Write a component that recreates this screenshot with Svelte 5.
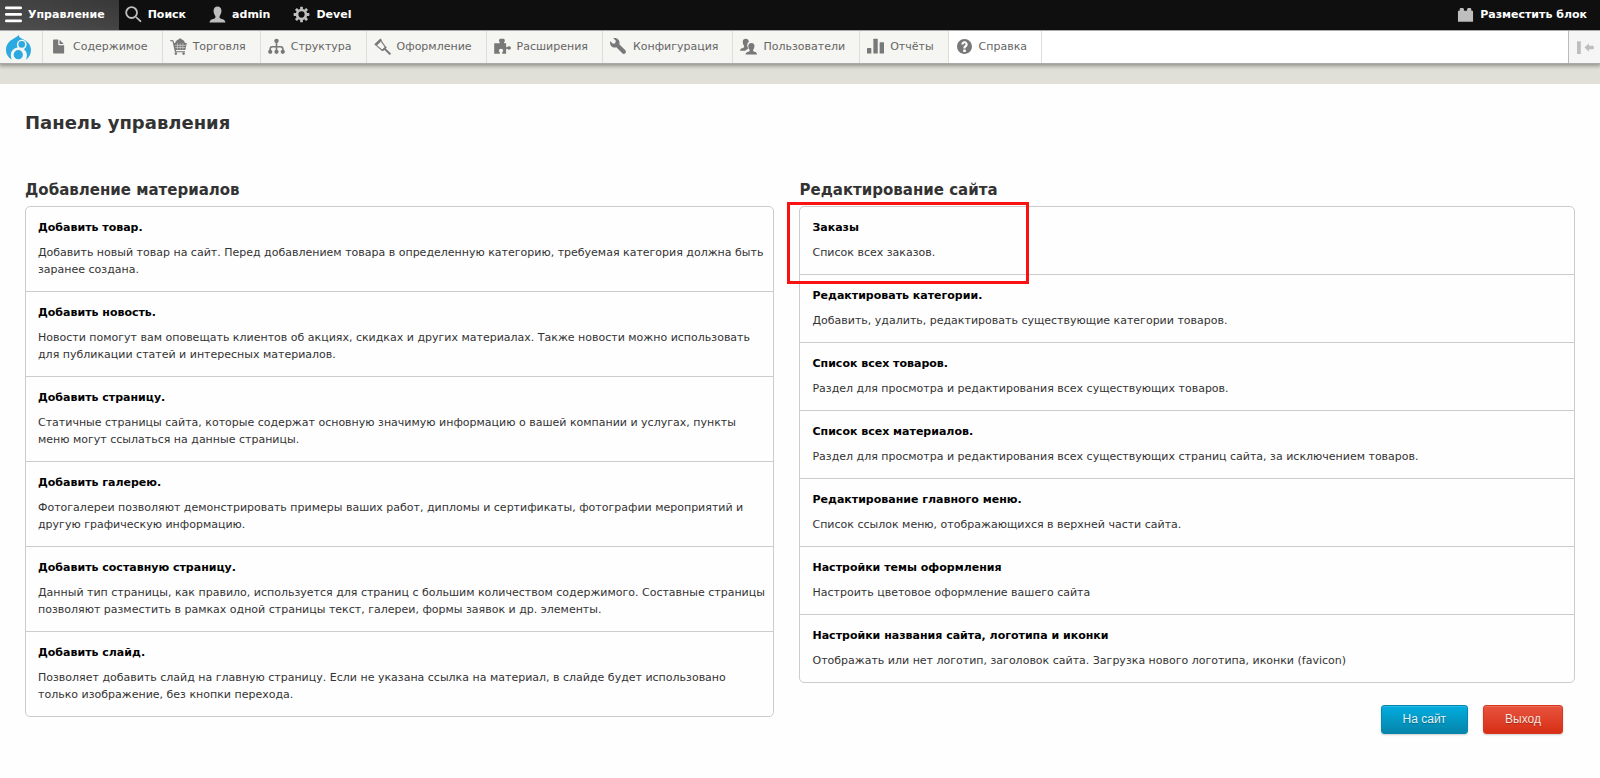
<script>
  const bar = [
    { icon: 'menu', label: 'Управление', active: true },
    { icon: 'search', label: 'Поиск' },
    { icon: 'user', label: 'admin' },
    { icon: 'gear', label: 'Devel' }
  ];

  const menu = [
    { icon: 'file', label: 'Содержимое' },
    { icon: 'cart', label: 'Торговля' },
    { icon: 'tree', label: 'Структура' },
    { icon: 'brush', label: 'Оформление' },
    { icon: 'puzzle', label: 'Расширения' },
    { icon: 'wrench', label: 'Конфигурация' },
    { icon: 'people', label: 'Пользователи' },
    { icon: 'chart', label: 'Отчёты' },
    { icon: 'help', label: 'Справка', plain: true }
  ];

  const adding = [
    ['Добавить товар.', 'Добавить новый товар на сайт. Перед добавлением товара в определенную категорию, требуемая категория должна быть заранее создана.'],
    ['Добавить новость.', 'Новости помогут вам оповещать клиентов об акциях, скидках и других материалах. Также новости можно использовать для публикации статей и интересных материалов.'],
    ['Добавить страницу.', 'Статичные страницы сайта, которые содержат основную значимую информацию о вашей компании и услугах, пункты меню могут ссылаться на данные страницы.'],
    ['Добавить галерею.', 'Фотогалереи позволяют демонстрировать примеры ваших работ, дипломы и сертификаты, фотографии мероприятий и другую графическую информацию.'],
    ['Добавить составную страницу.', 'Данный тип страницы, как правило, используется для страниц с большим количеством содержимого. Составные страницы позволяют разместить в рамках одной страницы текст, галереи, формы заявок и др. элементы.'],
    ['Добавить слайд.', 'Позволяет добавить слайд на главную страницу. Если не указана ссылка на материал, в слайде будет использовано только изображение, без кнопки перехода.']
  ];

  const editing = [
    ['Заказы', 'Список всех заказов.'],
    ['Редактировать категории.', 'Добавить, удалить, редактировать существующие категории товаров.'],
    ['Список всех товаров.', 'Раздел для просмотра и редактирования всех существующих товаров.'],
    ['Список всех материалов.', 'Раздел для просмотра и редактирования всех существующих страниц сайта, за исключением товаров.'],
    ['Редактирование главного меню.', 'Список ссылок меню, отображающихся в верхней части сайта.'],
    ['Настройки темы оформления', 'Настроить цветовое оформление вашего сайта'],
    ['Настройки названия сайта, логотипа и иконки', 'Отображать или нет логотип, заголовок сайта. Загрузка нового логотипа, иконки (favicon)']
  ];
</script>

{#snippet icon(name)}
  <svg class="icon" viewBox="0 0 16 16" aria-hidden="true" fill="currentColor">
    {#if name === 'menu'}
      <rect x="0" y="0.5" width="16" height="2.6" rx="1.2" />
      <rect x="0" y="6.6" width="16" height="2.6" rx="1.2" />
      <rect x="0" y="12.8" width="16" height="2.6" rx="1.2" />
    {:else if name === 'search'}
      <circle cx="6.2" cy="6.2" r="5.1" fill="none" stroke="currentColor" stroke-width="1.7" />
      <path d="M9.8 10.9l1.1-1.1 4.2 3.8c.6.6.2 1.6-.5 1.6-.3 0-.5-.1-.7-.3z" />
    {:else if name === 'user'}
      <path d="M8 .5c2.4 0 3.7 1.7 3.7 4 0 1.8-.7 3.600-1.500 4.700-.5.800-.4 2 .5 2.500 1.500.7 4.600.8 4.800 3.800H.5c.2-3 3.300-3.100 4.800-3.800.9-.5 1-1.700.5-2.500C5 8.100 4.300 6.300 4.300 4.500 4.300 2.200 5.600.5 8 .5z" />
    {:else if name === 'gear'}
      <circle cx="8" cy="8" r="4.2" fill="none" stroke="currentColor" stroke-width="2.5" />
      {#each [0, 45, 90, 135, 180, 225, 270, 315] as angle}
        <rect x="6.700" y="0.600" width="2.600" height="3" rx=".4" transform="rotate({angle} 8 8)" />
      {/each}
    {:else if name === 'brick'}
      <path d="M1.500 4.500h1V3C2.500 2.200 3.200 1.900 4.500 1.900s2 .3 2 1.100v1.500h3V3c0-.8.800-1.100 2-1.100s2 .3 2 1.100v1.500h1c.4 0 .6.200.6.600v9.300c0 .3-.2.500-.5.500H1.400c-.3 0-.5-.2-.5-.5V5.100c0-.4.200-.6.600-.6z" />
    {:else if name === 'file'}
      <path d="M3.500 1.500h4.300v4.700c0 .4.300.7.700.7h4.800v7c0 .3-.3.600-.6.600H3.500c-.3 0-.6-.3-.6-.6V2.100c0-.3.300-.6.600-.6zM9 1.700l4 4H9z" />
    {:else if name === 'cart'}
      <path d="M.1 2.300c0-.4.300-.6.700-.5l1.900.4c.4.100.6.300.7.700l.4 1.800h1C5.500 2.800 6.800 1.600 8.300 1.200L9.500 0l1.200 1.200c1.600.4 2.900 1.700 3.500 3.500h1.600l-1.200 5.900c-.1.400-.3.600-.7.600H5.500l.3 1.200h8.300v1H5.200c-.4 0-.6-.2-.7-.6L2.400 3.300.9 3C.4 2.900.1 2.700.1 2.300z" />
      <circle cx="5.500" cy="14.700" r="1.200" /><circle cx="12.800" cy="14.700" r="1.200" />
      <path d="M4.500 6.900h10.500M5 9h9.600M7.100 5v6M9.600 5v6M12.100 5v6" fill="none" stroke="#f5f5f2" stroke-width=".45" />
    {:else if name === 'tree'}
      <path d="M8 3v10M2 13v-2.300Q2 8.300 4 8.300h8q2 0 2 2.400V13" fill="none" stroke="currentColor" stroke-width="1.500" />
      <circle cx="8" cy="2.700" r="2.100" /><circle cx="2.100" cy="13" r="2" /><circle cx="8" cy="13" r="2" /><circle cx="13.900" cy="13" r="2" />
    {:else if name === 'brush'}
      <path d="M.3 5.900L6 .4l1.700 1.700-5.600 5.600z" />
      <path d="M2.700 7.400l5.200 4.300 3-3-4-5.600" fill="none" stroke="currentColor" stroke-width="1.100" stroke-linejoin="round" />
      <path d="M7.100 11.800l3.900-4 .9.900-.7 1.500 4.300 4c.9.900-.4 2.200-1.300 1.400l-4.300-4.200-1.700.8z" />
    {:else if name === 'puzzle'}
      <path d="M.2 4.900h4.900c.4 0 .5-.4.200-.8-.8-1-.8-2.900.4-3.500h3.600c1.100.7 1.100 2.500.3 3.500-.3.400-.1.800.3.800h1.500v3.200c0 .6.500.8 1 .4 1.400-1.100 3.500-.8 3.500.9s-2 2-3.400 1c-.6-.4-1.100-.2-1.100.400v4.100H7.700v-1.300c0-.4.900-.8.900-1.700 0-1-.9-1.700-2-1.700s-2 .7-2 1.700c0 .9.900 1.300.9 1.700v1.300H.2z" />
    {:else if name === 'wrench'}
      <path d="M14.416 11.586L8.750 5.921c.15-.449.252-.921.252-1.421 0-2.485-2.016-4.500-4.502-4.500-.505 0-.981.102-1.434.255l2.431 2.431-.588 2.196-2.196.588L.268 3.025C.106 3.489 0 3.981 0 4.500 0 6.986 2.014 9 4.500 9c.5 0 .972-.102 1.421-.251l5.667 5.665c.781.781 2.047.781 2.828 0s.781-2.047 0-2.828z" />
    {:else if name === 'people'}
      <path d="M5.500.8c1.900 0 2.900 1.200 2.800 3-1.500.7-1.700 2.300-1.400 4 .2.900.6 1.500 1 2.100-.9.800-2.300.8-2.900 2H.1c0-2.200 2-2.200 3.100-2.800.9-.5.9-1.200.4-2C3 6.100 2.600 5 2.600 3.700 2.600 2 3.700.8 5.500.8z" />
      <path d="M10.700 4.600c1.900 0 2.900 1.200 2.900 2.900 0 1.300-.4 2.400-1 3.300-.5.800-.5 1.400.4 1.800 1.200.6 3 .6 3 2.900H5.300c0-2.300 2-2.300 3.200-2.900.8-.4.8-1 .3-1.800-.6-.9-1-2-1-3.300 0-1.700 1-2.900 2.900-2.900z" />
    {:else if name === 'chart'}
      <rect x="0" y="9.500" width="4.100" height="5" rx=".5" />
      <rect x="6" y="0.700" width="4.100" height="13.800" rx=".5" />
      <rect x="11.900" y="4" width="4.100" height="10.500" rx=".5" />
    {:else if name === 'help'}
      <path d="M8.002 1c-3.868 0-7.002 3.134-7.002 7s3.134 7 7.002 7c3.865 0 7-3.134 7-7s-3.135-7-7-7zm3 5c0 .551-.16 1.085-.477 1.586l-.158.22c-.07.093-.189.241-.361.393-.168.148-.35.299-.545.447l-.203.189-.141.129-.096.17-.021.235v.63h-2.001v-.704c.026-.396.078-.73.204-.999.125-.269.271-.498.439-.688l.225-.21-.01-.015.176-.14.137-.128c.186-.139.357-.277.516-.417l.148-.18c.098-.152.168-.323.168-.518 0-.552-.447-1-1.002-1-.552 0-.999.448-.999 1h-2.002c0-1.657 1.343-3 3.002-3 1.656 0 3 1.343 3 3zm-1.750 6.619c0 .344-.281.625-.625.625h-1.250c-.345 0-.626-.281-.626-.625v-1.238c0-.344.281-.625.626-.625h1.250c.344 0 .625.281.625.625v1.238z" />
    {:else if name === 'collapse'}
      <path d="M0 2h3.600v12H0zM7 8l4.300-4v2.300H15c.5 0 .8.300.8.800v1.800c0 .5-.3.800-.8.800h-3.700V12z" />
    {/if}
  </svg>
{/snippet}

{#snippet list(items, marked)}
  <ul class="list">
    {#each items as [title, text], i}
      <li class:marked={marked && i === 0}>
        <a href="#top">{title}</a>
        <p>{text}</p>
      </li>
    {/each}
  </ul>
{/snippet}

<header>
  <nav class="bar" aria-label="Панель инструментов">
    {#each bar as item}
      <a class="tab" class:active={item.active} href="#top">{@render icon(item.icon)}{item.label}</a>
    {/each}
    <a class="tab place" href="#top">{@render icon('brick')}Разместить блок</a>
  </nav>
  <nav class="tray" aria-label="Управление">
    <a class="home" href="#top" aria-label="Главная">
      <svg viewBox="0 0 25 27" aria-hidden="true">
        <path fill="#2ba9e0" d="M12.300.5c.4 2.300 1.900 3.300 4.700 4.700C21.500 7.400 25 10.600 25 16c0 4.100-2.100 7.700-5.100 9.700.7-1.300 1-2.700 1-4.200 0-2.800-1.200-4.900-3-6.300 1.600-.9 2.700-2.700 2.700-4.700 0-2.800-2.100-4.800-4.800-4.800s-4.800 1.900-4.900 4.700c0 1.200.3 2.300.9 3.100C7.800 14 4.800 17 4.800 21.300c0 1.600.3 3 1 4.200C2.300 23.600 0 20 0 16c0-5.200 2.600-8.400 6.300-10.600C9.600 3.400 11.900 2.800 12.300.5z" />
        <circle cx="15.700" cy="10.400" r="3.300" fill="#2ba9e0" />
        <circle cx="12.300" cy="20.700" r="4.600" fill="#2ba9e0" />
      </svg>
    </a>
    {#each menu as item}
      <a class="entry" class:plain={item.plain} href="#top">{@render icon(item.icon)}{item.label}</a>
    {/each}
    <button class="collapse" type="button" aria-label="Свернуть меню">{@render icon('collapse')}</button>
  </nav>
</header>
<div class="strip"></div>

<main id="top">
  <h1>Панель управления</h1>
  <div class="columns">
    <section>
      <h2>Добавление материалов</h2>
      {@render list(adding, false)}
    </section>
    <section>
      <h2>Редактирование сайта</h2>
      {@render list(editing, true)}
      <div class="actions">
        <button class="action" type="button">На сайт</button>
        <button class="action exit" type="button">Выход</button>
      </div>
    </section>
  </div>
</main>

<style>
  :global(body) {
    margin: 0;
    background: #fefefe;
    color: #333;
    font: 11px/17px "DejaVu Sans", sans-serif;
  }
  a { color: inherit; text-decoration: none; }
  .icon { width: 17px; height: 17px; flex: none; }

  header {
    position: relative;
    box-shadow: 0 1px 4px 1px rgba(0, 0, 0, 0.35);
  }
  .bar {
    display: flex;
    height: 30px;
    background: #0f0f0f;
    color: #fff;
    font-weight: bold;
  }
  .tab {
    display: flex;
    align-items: center;
    gap: 6px;
    padding: 0 17px 2px 6px;
  }
  .tab .icon { color: #bebebe; }
  .tab.active {
    padding-left: 5px;
    padding-right: 14px;
    background: linear-gradient(90deg, rgba(255, 255, 255, 0.06), transparent), linear-gradient(#383838, #444);
  }
  .tab.active .icon { color: #fff; }
  .tab.place { margin-left: auto; padding-right: 13px; }

  .tray {
    display: flex;
    height: 32px;
    border-top: 1px solid #aaa;
    border-bottom: 1px solid #aaa;
    background: #fff;
    color: #656565;
  }
  .home {
    display: flex;
    align-items: center;
    padding: 1px 11px 1px 6px;
    background: #f5f5f2;
    border-right: 1px solid #ddd;
  }
  .home svg { width: 25px; height: 27px; }
  .entry {
    display: flex;
    align-items: center;
    gap: 6px;
    padding: 0 14px 1px 7px;
    border-right: 1px solid #ddd;
    background: #f5f5f2;
  }
  .entry .icon { color: #787878; }
  .entry.plain { background: #fff; }
  .collapse {
    display: flex;
    align-items: center;
    margin-left: auto;
    padding: 0 6px 0 8px;
    border: 0;
    border-left: 1px solid #bbb;
    background: #f5f5f5;
    color: #bebebe;
  }
  .strip { height: 20px; background: #e0e0d8; }

  main { padding: 27px 25px; }
  h1 { margin: 0; font-size: 18px; line-height: 24px; }
  h2 { margin: 0; padding-bottom: 6px; font-size: 15px; line-height: 20px; }
  .columns {
    display: grid;
    grid-template-columns: minmax(0, 749fr) minmax(0, 775fr);
    align-items: start;
    gap: 25px;
    padding-top: 45px;
  }
  .list {
    margin: 0;
    padding: 0;
    list-style: none;
    border: 1px solid #ccc;
    border-radius: 5px;
  }
  li { padding: 12px 6px 13px 12px; }
  li + li { border-top: 1px solid #ccc; }
  li a { display: block; color: #000; font-weight: bold; }
  p { margin: 8px 0 0; }
  .marked { position: relative; }
  .marked::after {
    content: "";
    position: absolute;
    top: -5px;
    left: -13px;
    width: 236px;
    height: 76px;
    border: 3px solid #f91212;
    pointer-events: none;
  }
  .actions {
    display: flex;
    justify-content: flex-end;
    gap: 15px;
    padding: 22px 12px 0 0;
  }
  .action {
    padding: 6px 21px;
    border: 1px solid #0787ad;
    border-radius: 3px;
    background: linear-gradient(#00ade0, #0785aa);
    box-shadow: 0 1px 2px rgba(0, 0, 0, 0.2), inset 0 1px 0 rgba(255, 255, 255, 0.15);
    color: #e2f2f7;
    font: 12px/15px "Liberation Sans", Arial, sans-serif;
    text-shadow: 0 1px 1px rgba(0, 0, 0, 0.3);
  }
  .action.exit {
    border-color: #d5381e;
    background: linear-gradient(#e8543f, #d72e15);
    color: #fae3de;
  }
</style>
